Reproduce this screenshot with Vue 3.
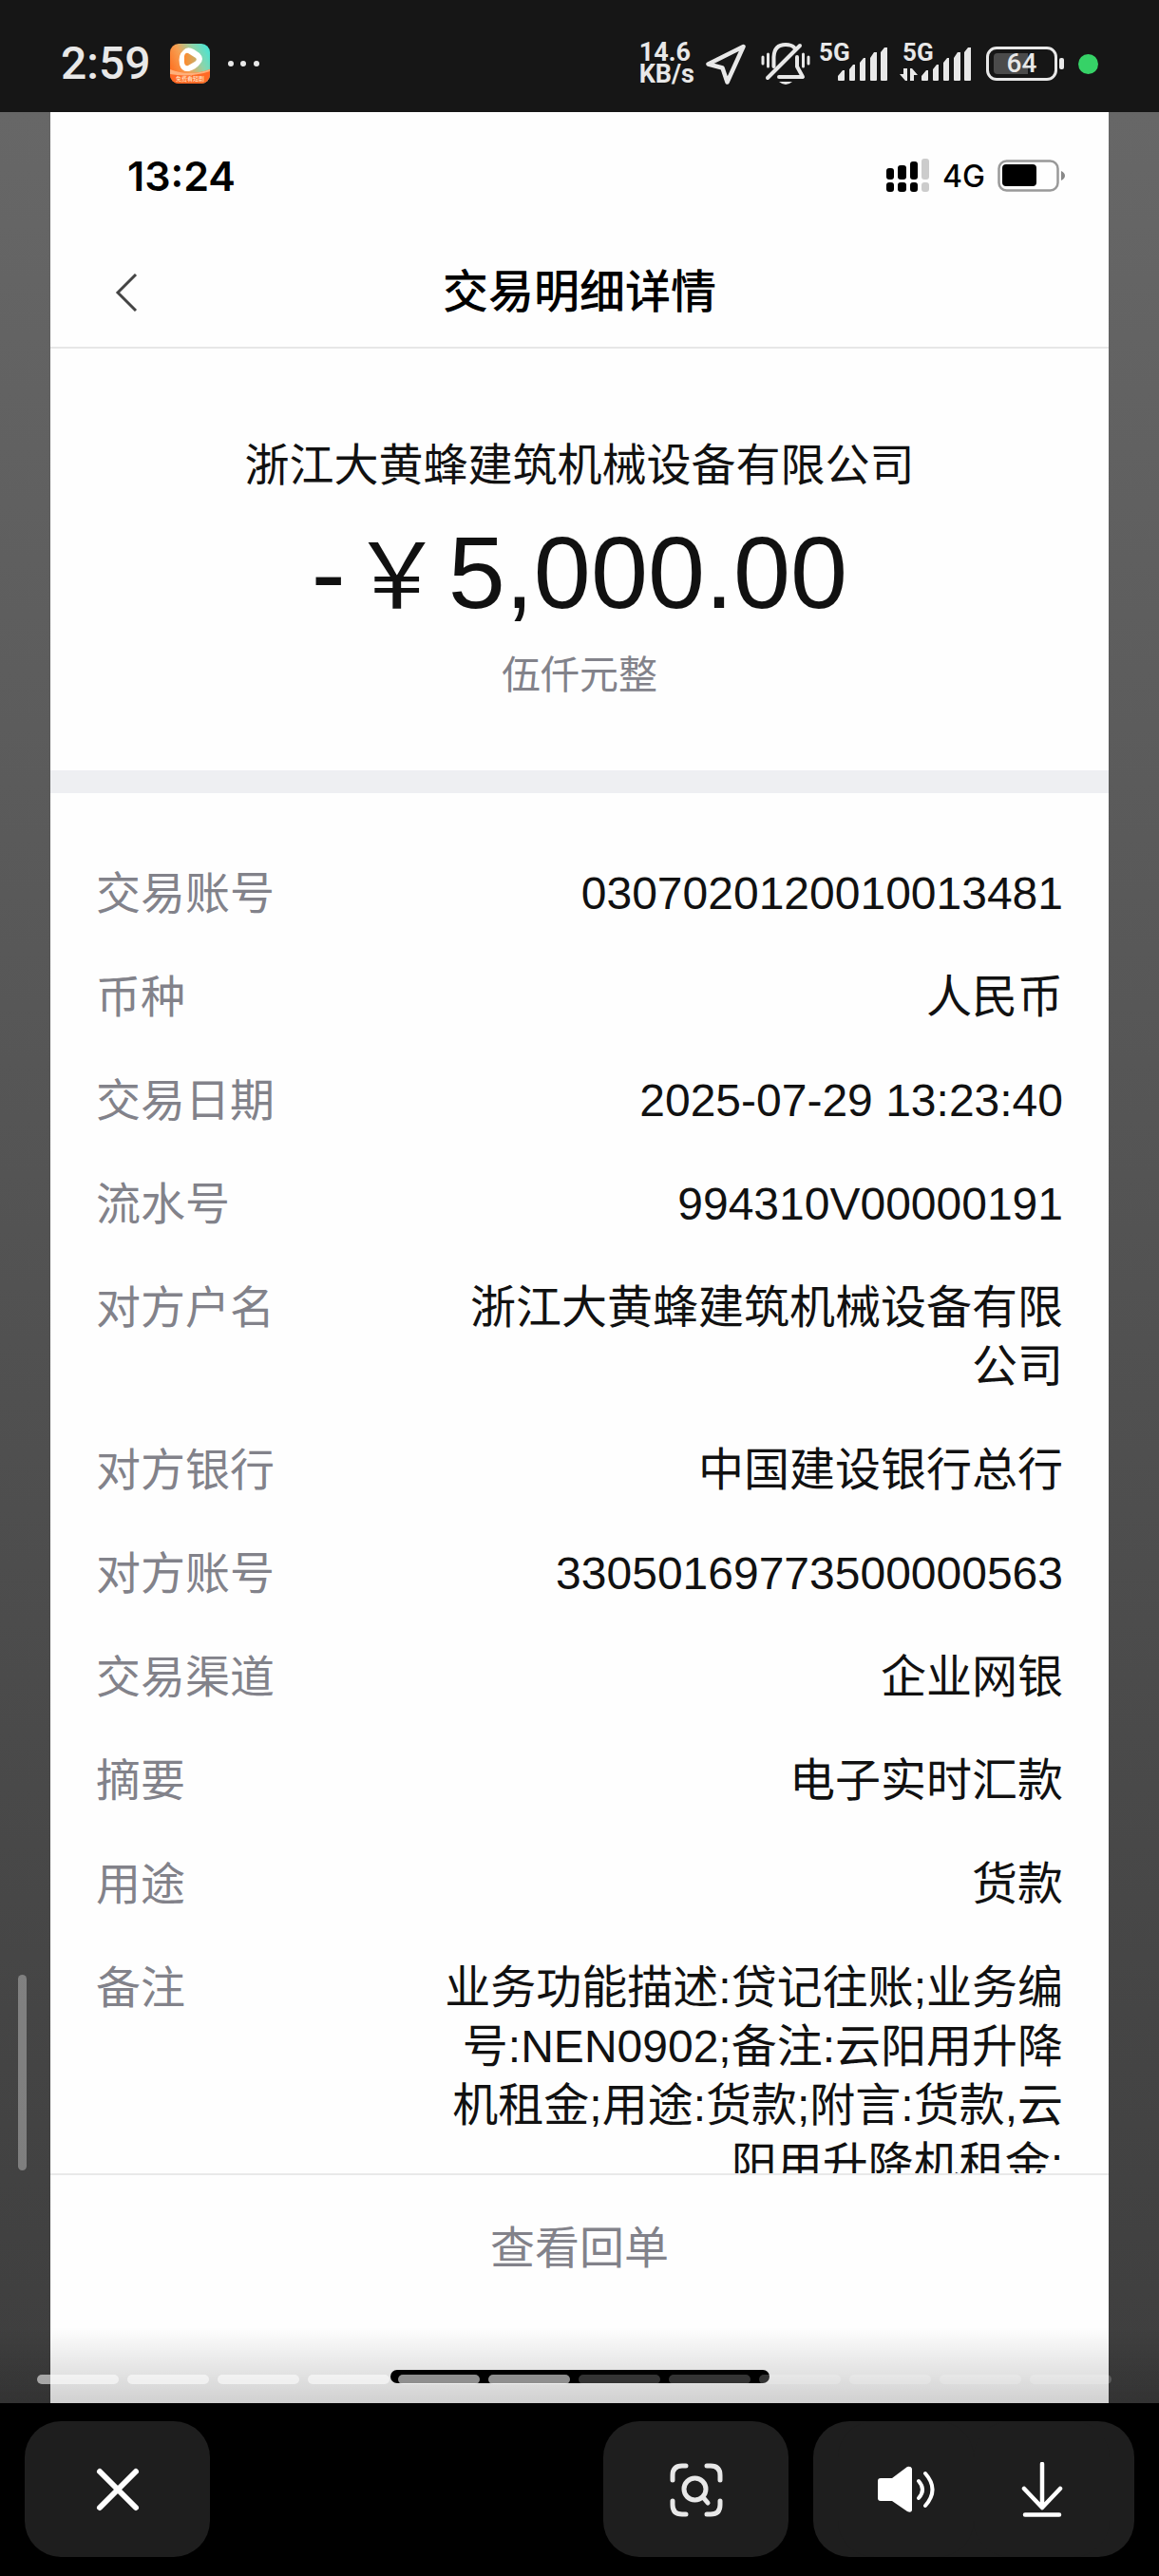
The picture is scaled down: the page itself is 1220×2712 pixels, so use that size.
<script setup>
const details = [
  { label: '交易账号', value: '0307020120010013481' },
  { label: '币种', value: '人民币' },
  { label: '交易日期', value: '2025-07-29 13:23:40' },
  { label: '流水号', value: '994310V00000191' },
  { label: '对方户名', value: '浙江大黄蜂建筑机械设备有限公司' },
  { label: '对方银行', value: '中国建设银行总行' },
  { label: '对方账号', value: '33050169773500000563' },
  { label: '交易渠道', value: '企业网银' },
  { label: '摘要', value: '电子实时汇款' },
  { label: '用途', value: '货款' },
  {
    label: '备注',
    value: '业务功能描述:贷记往账;业务编号:NEN0902;备注:云阳用升降机租金;用途:货款;附言:货款,云阳用升降机租金;',
  },
]

const segmentCount = 12
const currentSegment = 6
</script>

<template>
  <div class="screen">
    <header class="system-bar">
      <div class="system-left">
        <span class="system-time">2:59</span>
        <svg class="app-icon" width="42" height="42" viewBox="0 0 42 42" aria-hidden="true">
          <defs>
            <linearGradient id="appBg" x1="0" y1="0.75" x2="1" y2="0.25">
              <stop offset="0" stop-color="#ff6a1c" />
              <stop offset="0.4" stop-color="#f6a052" />
              <stop offset="0.72" stop-color="#8fd3a8" />
              <stop offset="1" stop-color="#4fe3d0" />
            </linearGradient>
            <linearGradient id="appPlay" x1="0" y1="0" x2="1" y2="0">
              <stop offset="0" stop-color="#ff8a2e" />
              <stop offset="1" stop-color="#c6ae6a" />
            </linearGradient>
            <clipPath id="appClip"><rect width="42" height="42" rx="9" /></clipPath>
          </defs>
          <g clip-path="url(#appClip)">
            <rect width="42" height="42" fill="url(#appBg)" />
            <path d="M0 27Q21 35 42 27V42H0Z" fill="#ff6a26" />
            <path d="M0 27Q21 35 42 27V29Q21 36 0 32Z" fill="#ffb07a" />
            <path d="M14 7Q18 2 25 6L31 10Q37 16 31 22Q27 27 20 29Q12 30 10 22Q8 12 14 7Z" fill="#fff" />
            <path d="M15 13Q16 9 19 10L27 15Q29 17 26 19L19 23Q16 24 15 20Z" fill="url(#appPlay)" />
            <text x="21" y="39" text-anchor="middle" class="app-caption">免费看短剧</text>
          </g>
        </svg>
        <svg width="34" height="42" viewBox="0 0 34 42" fill="#e8e8e8" aria-hidden="true">
          <circle cx="4" cy="21" r="3" />
          <circle cx="17" cy="21" r="3" />
          <circle cx="31" cy="21" r="3" />
        </svg>
      </div>

      <div class="system-right">
        <div class="net-speed"><span>14.6</span><span>KB/s</span></div>
        <svg class="plane" width="44" height="46" viewBox="0 0 44 46" fill="none" stroke="#e8e8e8" stroke-width="4.500" stroke-linejoin="round" aria-hidden="true">
          <path d="M40.500 5L3.500 23.500L18.500 27.500L23.500 42.500Z" />
        </svg>
        <svg class="bell" width="52" height="46" viewBox="0 0 52 46" fill="none" stroke="#e8e8e8" stroke-linecap="round" aria-hidden="true">
          <path d="M2 16v7M7.500 13v13M44.500 13v13M50 16v7" stroke-width="3" />
          <path d="M13.500 26V16Q14 3 26 3Q32 3 35 6" stroke-width="4" />
          <path d="M38 16V26L44 37H19" stroke-width="4" stroke-linejoin="round" />
          <path d="M41 4L7 38" stroke-width="4" />
          <path d="M19 42H33Q26 48 19 42Z" fill="#e8e8e8" stroke="none" />
        </svg>
        <div class="cell">
          <span class="cell-label">5G</span>
          <svg width="74" height="46" viewBox="0 0 74 46" fill="#e8e8e8" aria-hidden="true">
            <path d="M20 40v-4l5-6h2v10q0 1-1 1h-5q-1 0-1-1ZM32 29l4-5h2v16q0 1-1 1h-4q-1 0-1-1ZM43 22l4-5h2v23q0 1-1 1h-4q-1 0-1-1ZM54 17l4-6h3v29q0 1-1 1h-5q-1 0-1-1ZM65 11l4-5h3v34q0 1-1 1h-5q-1 0-1-1Z" />
          </svg>
        </div>
        <div class="cell cell-active">
          <span class="cell-label">5G</span>
          <svg width="78" height="46" viewBox="0 0 78 46" fill="#e8e8e8" aria-hidden="true">
            <path d="M24 40v-4l5-6h2v10q0 1-1 1h-5q-1 0-1-1ZM36 29l4-5h2v16q0 1-1 1h-4q-1 0-1-1ZM47 22l4-5h2v23q0 1-1 1h-4q-1 0-1-1ZM58 17l4-6h3v29q0 1-1 1h-5q-1 0-1-1ZM69 11l4-5h3v34q0 1-1 1h-5q-1 0-1-1Z" />
            <path d="M5 28h4v13h-2l-6-7h4ZM12 41V28h2l6 7h-4v6Z" />
          </svg>
        </div>
        <div class="battery">
          <span class="battery-fill"></span>
          <span class="battery-level">64</span>
        </div>
        <span class="battery-tip"></span>
        <span class="privacy-dot"></span>
      </div>
    </header>

    <main class="stage">
      <article class="receipt">
        <div class="phone-bar">
          <span class="phone-time">13:24</span>
          <div class="phone-status">
            <svg width="46" height="36" viewBox="0 0 46 36" aria-hidden="true">
              <g fill="#000">
                <rect x="0" y="10" width="8" height="12" rx="3" />
                <rect x="12" y="7" width="9" height="15" rx="3" />
                <rect x="25" y="3" width="8" height="19" rx="3" />
                <rect x="0" y="25" width="8" height="10" rx="3" />
                <rect x="12" y="25" width="9" height="10" rx="3" />
                <rect x="25" y="25" width="8" height="10" rx="3" />
              </g>
              <g fill="#ccc">
                <rect x="37" y="0" width="8" height="22" rx="3" />
                <rect x="37" y="25" width="8" height="10" rx="3" />
              </g>
            </svg>
            <span class="phone-net">4G</span>
            <svg width="73" height="34" viewBox="0 0 73 34" aria-hidden="true">
              <rect x="1.500" y="1.500" width="62" height="31" rx="8" fill="none" stroke="#999" stroke-width="2.500" />
              <rect x="5" y="5" width="36" height="23" rx="4" fill="#000" />
              <path d="M67 12Q71 14 71 17T67 22Z" fill="#888" />
            </svg>
          </div>
        </div>

        <nav class="nav">
          <button class="back" type="button" aria-label="返回">
            <svg width="24" height="40" viewBox="0 0 24 40" fill="none" stroke="#444" stroke-width="3" aria-hidden="true">
              <path d="M22 1L3 20L22 39" />
            </svg>
          </button>
          <h1>交易明细详情</h1>
        </nav>

        <section class="summary">
          <p class="payee">浙江大黄蜂建筑机械设备有限公司</p>
          <p class="amount">-<span class="currency">￥</span>5,000.00</p>
          <p class="amount-words">伍仟元整</p>
        </section>

        <dl class="details">
          <div v-for="item in details" :key="item.label" class="row">
            <dt>{{ item.label }}</dt>
            <dd>{{ item.value }}</dd>
          </div>
        </dl>

        <footer class="receipt-footer">
          <button class="view-slip" type="button">查看回单</button>
          <span class="home-pill"></span>
        </footer>
      </article>

      <div class="shade"></div>
      <div class="segments">
        <span v-for="n in segmentCount" :key="n" :class="{ seen: n <= currentSegment }"></span>
      </div>
      <span class="edge-handle"></span>
    </main>

    <div class="toolbar">
      <button class="tool" type="button" aria-label="关闭">
        <svg width="58" height="58" viewBox="0 0 58 58" fill="none" stroke="#fff" stroke-width="6" stroke-linecap="round" aria-hidden="true">
          <path d="M10 10L48 48M48 10L10 48" />
        </svg>
      </button>
      <button class="tool scan" type="button" aria-label="识图">
        <svg width="58" height="58" viewBox="0 0 58 58" fill="none" stroke="#e8e8e8" stroke-width="5" stroke-linecap="round" aria-hidden="true">
          <path d="M4 19V14Q4 4 14 4H18M40 4H44Q54 4 54 14V19M54 41V45Q54 55 44 55H40M18 55H14Q4 55 4 45V41" />
          <circle cx="27.500" cy="28.500" r="11.500" />
          <path d="M36 37L41 43" />
        </svg>
      </button>
      <div class="tool-group">
        <button class="tool" type="button" aria-label="声音">
          <svg width="60" height="58" viewBox="0 0 60 58" aria-hidden="true">
            <path d="M3 17H15L31 5Q35 4 36 7V51Q35 54 31 52L15 41H3Q0 41 0 38V20Q0 17 3 17Z" fill="#fff" />
            <path d="M43 20Q51 29 43 38M50 12Q65 29 50 46" fill="none" stroke="#fff" stroke-width="4" stroke-linecap="round" />
          </svg>
        </button>
        <button class="tool" type="button" aria-label="下载">
          <svg width="44" height="58" viewBox="0 0 44 58" fill="none" stroke="#fff" stroke-width="4.500" stroke-linecap="round" stroke-linejoin="round" aria-hidden="true">
            <path d="M22 2V47M3 28L22 48L41 28M4 55.500H40" />
          </svg>
        </button>
      </div>
    </div>
  </div>
</template>

<style>
body {
  margin: 0;
  background: #000;
}
</style>

<style scoped>
.screen {
  display: flex;
  flex-direction: column;
  height: 100vh;
  font-family: "Liberation Sans", "Noto Sans CJK SC", sans-serif;
  font-size: 47px;
  color: #111;
}
h1, p, dl, dd {
  margin: 0;
}
button {
  padding: 0;
  border: 0;
  background: none;
  font: inherit;
  color: inherit;
}
svg {
  display: block;
}

/* System status bar */
.system-bar {
  display: flex;
  justify-content: space-between;
  flex: none;
  height: 118px;
  padding: 16px 64px 0;
  box-sizing: border-box;
  background: #161616;
  color: #e8e8e8;
  font-family: Roboto, sans-serif;
}
.system-left,
.system-right {
  display: flex;
  align-items: center;
}
.system-time {
  font-size: 48px;
  line-height: 56px;
  font-weight: 500;
}
.app-icon {
  margin: 0 18px 0 20px;
}
.app-caption {
  font-family: "Noto Sans CJK SC", sans-serif;
  font-size: 6px;
  fill: #fff0d8;
}
.net-speed {
  display: flex;
  flex-direction: column;
  font-size: 27px;
  line-height: 23px;
  font-weight: 700;
}
.plane {
  margin: 0 15px 0 11px;
}
.cell {
  position: relative;
  margin-left: 9px;
}
.cell-active {
  margin-left: 10px;
}
.cell-label {
  position: absolute;
  left: 0;
  top: 0;
  font-size: 26px;
  line-height: 22px;
  font-weight: 700;
}
.cell-active .cell-label {
  left: 4px;
}
.battery {
  position: relative;
  display: flex;
  align-items: center;
  justify-content: center;
  width: 75px;
  height: 36px;
  margin-left: 14px;
  box-sizing: border-box;
  border: 3px solid #e8e8e8;
  border-radius: 11px;
}
.battery-fill {
  position: absolute;
  left: 5px;
  top: 4px;
  bottom: 4px;
  width: 36px;
  border-radius: 4px 0 0 4px;
  background: #4b4b4b;
}
.battery-level {
  position: relative;
  font-size: 28px;
  line-height: 30px;
  font-weight: 500;
}
.battery-tip {
  width: 5px;
  height: 12px;
  margin: 0 15px 0 2px;
  border-radius: 2px;
  background: #e8e8e8;
}
.privacy-dot {
  width: 21px;
  height: 21px;
  border-radius: 50%;
  background: #36d267;
}

/* Viewer stage */
.stage {
  position: relative;
  flex: 1;
  min-height: 0;
  display: flex;
  padding: 0 53px;
  background: linear-gradient(#676767, #3e3e3e);
}
.receipt {
  flex: 1;
  min-width: 0;
  display: flex;
  flex-direction: column;
  background: #fefefe;
}
.phone-bar {
  display: flex;
  align-items: center;
  justify-content: space-between;
  flex: none;
  height: 134px;
  padding: 0 44px 0 81px;
  font-family: Inter, sans-serif;
  color: #000;
}
.phone-time {
  font-size: 43px;
  font-weight: 600;
}
.phone-status {
  display: flex;
  align-items: center;
  gap: 13px;
}
.phone-net {
  font-size: 32px;
  font-weight: 500;
}
.nav {
  display: grid;
  grid-template-columns: 1fr auto 1fr;
  align-items: center;
  flex: none;
  height: 111px;
  padding: 0 68px 2px;
  border-bottom: 2px solid #e7e7e7;
}
.back {
  justify-self: start;
}
.nav h1 {
  font-size: 48px;
  line-height: 62px;
  font-weight: 500;
  color: #000;
}
.summary {
  flex: none;
  padding: 92px 48px 72px;
  border-bottom: 24px solid #eeeff2;
  text-align: center;
}
.payee {
  line-height: 62px;
}
.amount {
  margin: 16px 0 14px;
  font-size: 108px;
  line-height: 132px;
}
.currency {
  padding: 0 6px;
  font-size: 96px;
  line-height: 1;
}
.amount-words {
  font-size: 41px;
  line-height: 56px;
  color: #82828a;
}
.details {
  flex: 1;
  min-height: 0;
  overflow: hidden;
  display: flex;
  flex-direction: column;
  gap: 47px;
  padding: 75px 48px 0;
}
.row {
  display: flex;
  justify-content: space-between;
  flex: none;
  line-height: 62px;
}
.row dt {
  color: #82828a;
}
.row dd {
  width: 65%;
  font-size: 48px;
  text-align: right;
}
.receipt-footer {
  display: flex;
  flex-direction: column;
  align-items: center;
  justify-content: space-between;
  flex: none;
  height: 219px;
  padding-bottom: 21px;
  border-top: 2px solid #e9e9e9;
}
.view-slip {
  width: 100%;
  height: 144px;
  color: #82828a;
}
.home-pill {
  width: 399px;
  height: 14px;
  border-radius: 7px;
  background: #000;
}

/* Overlays on the stage */
.shade {
  position: absolute;
  left: 0;
  right: 0;
  bottom: 0;
  height: 80px;
  background: linear-gradient(rgba(0, 0, 0, 0), rgba(0, 0, 0, 0.18));
}
.segments {
  position: absolute;
  left: 39px;
  right: 50px;
  bottom: 20px;
  display: grid;
  grid-template-columns: repeat(12, 1fr);
  gap: 9px;
}
.segments span {
  height: 10px;
  border-radius: 5px;
  background: rgba(255, 255, 255, 0.2);
}
.segments .seen {
  background: rgba(255, 255, 255, 0.56);
}
.edge-handle {
  position: absolute;
  left: 19px;
  bottom: 245px;
  width: 9px;
  height: 206px;
  border-radius: 5px;
  background: rgba(255, 255, 255, 0.32);
}

/* Bottom toolbar */
.toolbar {
  display: flex;
  gap: 26px;
  flex: none;
  height: 143px;
  padding: 19px 26px 20px;
  background: #000;
}
.tool {
  display: flex;
  align-items: center;
  justify-content: center;
  width: 195px;
  border-radius: 38px;
  background: #1e1e1e;
}
.scan {
  margin-left: auto;
}
.tool-group {
  display: flex;
  padding: 0 26px;
  border-radius: 38px;
  background: #1e1e1e;
}
.tool-group .tool {
  width: 143px;
}
</style>
